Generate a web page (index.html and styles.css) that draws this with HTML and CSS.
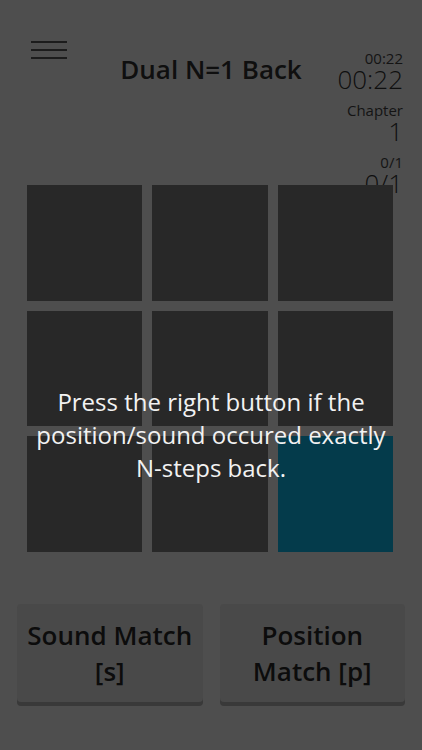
FILE: index.html
```html
<!DOCTYPE html>
<html lang="en">
<head>
<meta charset="utf-8">
<title>Dual N-Back</title>
<link rel="stylesheet" href="styles.css">
</head>
<body>
<div class="screen">
  <header class="header">
    <div class="menu">
      <svg width="36" height="18" viewBox="0 0 36 18" aria-hidden="true">
        <rect x="0" y="0" width="36" height="2" fill="#1c1c1c"/>
        <rect x="0" y="8" width="36" height="2" fill="#1c1c1c"/>
        <rect x="0" y="16" width="36" height="2" fill="#1c1c1c"/>
      </svg>
    </div>
    <h1 class="title">Dual N=1 Back</h1>
    <div class="stats">
      <div class="stat">
        <div class="stat-label">00:22</div>
        <div class="stat-value">00:22</div>
      </div>
      <div class="stat">
        <div class="stat-label">Chapter</div>
        <div class="stat-value">1</div>
      </div>
      <div class="stat">
        <div class="stat-label">0/1</div>
        <div class="stat-value">0/1</div>
      </div>
    </div>
  </header>

  <div class="board">
    <div class="cell"></div>
    <div class="cell"></div>
    <div class="cell"></div>
    <div class="cell"></div>
    <div class="cell"></div>
    <div class="cell"></div>
    <div class="cell"></div>
    <div class="cell"></div>
    <div class="cell active"></div>
  </div>

  <div class="buttons">
    <div class="btn">Sound Match<br>[s]</div>
    <div class="btn">Position<br>Match [p]</div>
  </div>

  <p class="hint">Press the right button if the<br>position/sound occured exactly<br>N-steps back.</p>
</div>
</body>
</html>
```

FILE: styles.css
```css
html, body {
  margin: 0;
  padding: 0;
}
body {
  background: #4e4e4e;
  font-family: "Open Sans", "Noto Sans", sans-serif;
}
.screen {
  position: relative;
  width: 422px;
  height: 750px;
  overflow: hidden;
}
.header {
  height: 185px;
  display: grid;
  grid-template-columns: 1fr auto 1fr;
  align-items: start;
}
.menu {
  margin-top: 41px;
  margin-left: 31px;
  line-height: 0;
}
.title {
  margin: 51px 0 0 0;
  font-size: 26px;
  line-height: 36px;
  font-weight: 600;
  color: #0f0f0f;
  white-space: nowrap;
}
.stats {
  margin-top: 49px;
  padding-right: 19px;
  text-align: right;
  color: #141414;
}
.stat {
  margin-bottom: 9px;
}
.stat-label {
  font-size: 15px;
  line-height: 18px;
}
.stat-value {
  font-size: 26px;
  line-height: 25px;
  font-weight: 300;
  color: #0f0f0f;
}
.board {
  position: relative;
  margin-left: 27px;
  width: 366px;
  display: grid;
  grid-template-columns: repeat(3, 1fr);
  grid-auto-rows: 115.5px;
  gap: 10px;
}
.cell {
  background: #282828;
}
.cell.active {
  background: #043b4b;
}
.buttons {
  margin: 52px 17px 0 17px;
  display: grid;
  grid-template-columns: 1fr 1fr;
  gap: 17px;
}
.btn {
  height: 98px;
  background: #494949;
  border-radius: 4px;
  box-shadow: 0 4px 0 #393939;
  display: flex;
  align-items: center;
  justify-content: center;
  text-align: center;
  font-size: 26px;
  line-height: 36px;
  font-weight: 600;
  color: #0c0c0c;
}
.hint {
  position: absolute;
  top: 385px;
  left: 0;
  right: 0;
  margin: 0;
  text-align: center;
  font-size: 24px;
  line-height: 33px;
  color: #f2f2f2;
}
```
